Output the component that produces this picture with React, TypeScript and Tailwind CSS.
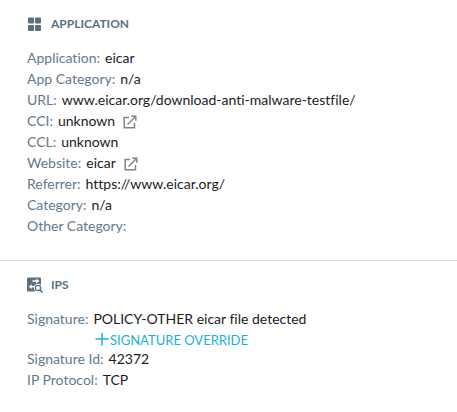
import React from "react";

type FieldProps = {
  label: string;
  value?: string;
  link?: boolean;
};

function OpenIcon() {
  return (
    <svg className="h-3.5 w-3.5" viewBox="0 0 14 14" fill="none" stroke="currentColor" strokeWidth="1.5">
      <path d="M6 2.5H1.2V12.8H11.5V8" />
      <path d="M4.5 9.5L12 2" />
      <path d="M8.3 1.2H12.8V5.7" />
    </svg>
  );
}

function AppsIcon() {
  return (
    <svg className="h-3.5 w-3.5" viewBox="0 0 14 14" fill="currentColor">
      <rect x="1" y="0.5" width="6" height="6" rx="1" />
      <rect x="8" y="0.5" width="6" height="6" rx="1" />
      <rect x="1" y="8" width="6" height="6" rx="1" />
      <rect x="8" y="8" width="6" height="6" rx="1" />
    </svg>
  );
}

function IpsIcon() {
  return (
    <svg className="h-4 w-4" viewBox="0 0 16 16" fill="none">
      <rect x="0" y="0.5" width="14" height="14" rx="1" fill="#5b7083" />
      {/* traffic arrows */}
      <path d="M5.5 4H10" stroke="#fff" strokeWidth="1.5" />
      <path d="M9.3 1.6L12.3 4L9.3 6.4Z" fill="#fff" />
      <path d="M4 9.7H7" stroke="#fff" strokeWidth="1.5" />
      <path d="M4.8 7.3L1.8 9.7L4.8 12.1Z" fill="#fff" />
      {/* magnifier */}
      <path d="M12.8 12.8L15.5 15.5" stroke="#fff" strokeWidth="3.5" />
      <circle cx="11" cy="11" r="4.2" fill="#fff" />
      <circle cx="11" cy="11" r="2.6" stroke="#5b7083" strokeWidth="1.3" />
      <path d="M12.9 12.9L15.5 15.5" stroke="#5b7083" strokeWidth="1.5" />
    </svg>
  );
}

function Heading({ icon, children }: { icon: React.ReactNode; children: React.ReactNode }) {
  return (
    <h2 className="flex h-5 items-center text-xs font-bold text-[#5b7083]">
      <span className="w-6">{icon}</span>
      {children}
    </h2>
  );
}

function Field({ label, value, link }: FieldProps) {
  return (
    <div className="flex items-center">
      <dt className="text-[#64798c]">{label}:</dt>
      <dd className="ml-[5px] flex items-center text-[#1b1b1b]">
        {value}
        {link && (
          <a href="#" aria-label={`Open ${label}`} className="ml-2 pt-0.5 text-[#808488]">
            <OpenIcon />
          </a>
        )}
      </dd>
    </div>
  );
}

const applicationFields: FieldProps[] = [
  { label: "Application", value: "eicar" },
  { label: "App Category", value: "n/a" },
  { label: "URL", value: "www.eicar.org/download-anti-malware-testfile/" },
  { label: "CCI", value: "unknown", link: true },
  { label: "CCL", value: "unknown" },
  { label: "Website", value: "eicar", link: true },
  { label: "Referrer", value: "https://www.eicar.org/" },
  { label: "Category", value: "n/a" },
  { label: "Other Category" },
];

export default function App() {
  return (
    <main className="min-h-screen bg-white font-['Lato',sans-serif] text-sm leading-[21px] [font-variant-ligatures:none]">
      {/* Application */}
      <section className="border-b border-[#dcdcdc] px-[27px] pt-3.5 pb-6">
        <Heading icon={<AppsIcon />}>APPLICATION</Heading>
        <dl className="mt-[13px]">
          {applicationFields.map((field) => (
            <Field key={field.label} {...field} />
          ))}
        </dl>
      </section>

      {/* IPS */}
      <section className="px-[27px] pt-3.5 pb-5">
        <Heading icon={<IpsIcon />}>IPS</Heading>
        <dl className="mt-[13px]">
          <Field label="Signature" value="POLICY-OTHER eicar file detected" />
        </dl>
        <button type="button" className="ml-17 flex h-[19px] items-center gap-px pt-[3px] text-[13px] text-[#19b0dc]">
          <svg className="h-3.5 w-3.5" viewBox="0 0 14 14" stroke="currentColor" strokeWidth="1.5">
            <path d="M0.5 6H13.5M7 0V12.5" />
          </svg>
          SIGNATURE OVERRIDE
        </button>
        <dl>
          <Field label="Signature Id" value="42372" />
          <Field label="IP Protocol" value="TCP" />
        </dl>
      </section>
    </main>
  );
}
